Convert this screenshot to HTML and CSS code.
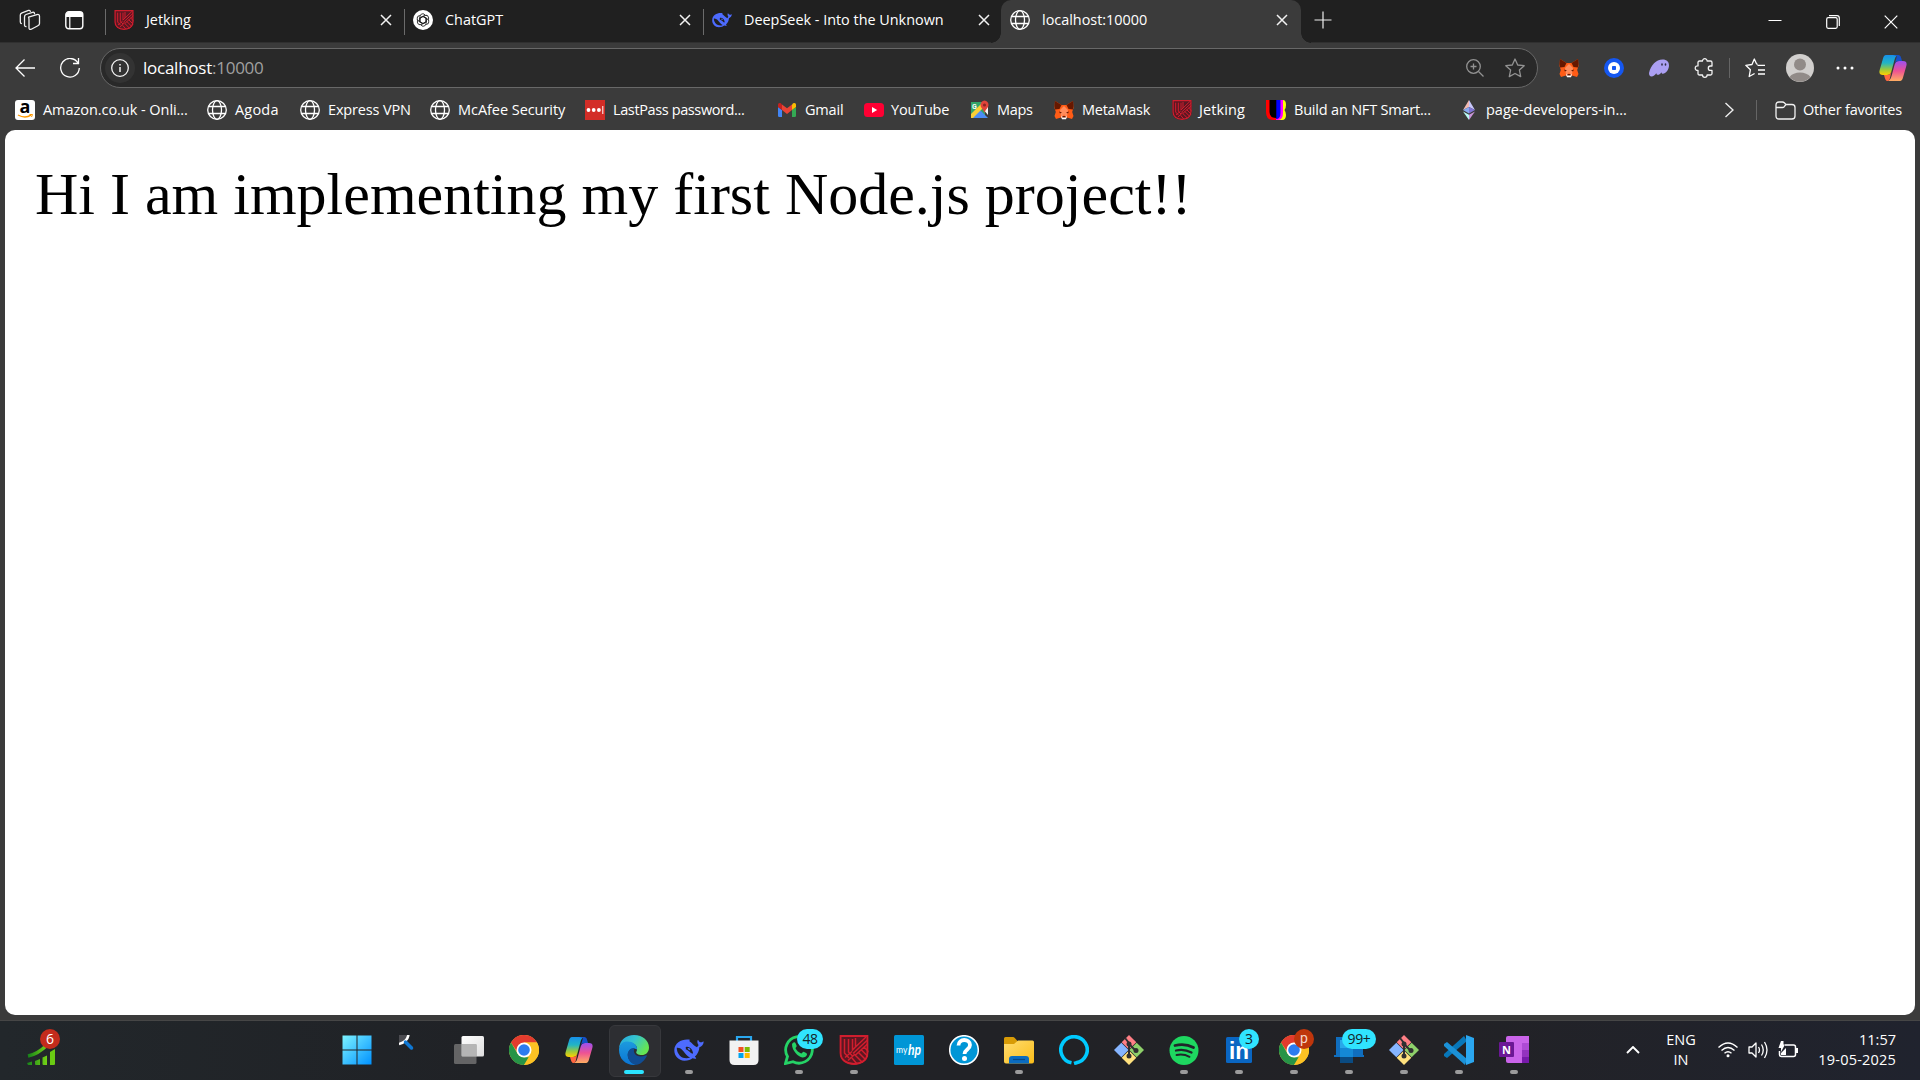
FILE: index.html
```html
<!DOCTYPE html>
<html lang="en">
<head>
<meta charset="utf-8">
<title>localhost:10000</title>
<link rel="stylesheet" href="styles.css">
</head>
<body>
<svg class="defs" width="0" height="0" aria-hidden="true">
  <defs>
    <linearGradient id="win" x1="0" y1="0" x2="1" y2="1"><stop offset="0" stop-color="#7df3ff"/><stop offset="1" stop-color="#0091ff"/></linearGradient>
    <linearGradient id="cpA" x1="0" y1="0" x2="0" y2="1"><stop offset="0" stop-color="#1790ea"/><stop offset=".4" stop-color="#22b5c4"/><stop offset=".72" stop-color="#9bc93c"/><stop offset="1" stop-color="#ffd000"/></linearGradient>
    <linearGradient id="cpB" x1="0" y1="0" x2="0" y2="1"><stop offset="0" stop-color="#9c50f0"/><stop offset=".5" stop-color="#ee5293"/><stop offset="1" stop-color="#ffae62"/></linearGradient>
    <linearGradient id="edgeTop" x1="0" y1="0" x2="1" y2=".5"><stop offset="0" stop-color="#24a5e0"/><stop offset=".5" stop-color="#35c4cf"/><stop offset="1" stop-color="#65e553"/></linearGradient>
    <linearGradient id="edgeLow" x1="0" y1="0" x2="0" y2="1"><stop offset="0" stop-color="#1c9ade"/><stop offset="1" stop-color="#0b75d4"/></linearGradient>
    <linearGradient id="folderG" x1="0" y1="0" x2="1" y2="1"><stop offset="0" stop-color="#ffdc70"/><stop offset="1" stop-color="#fbbd19"/></linearGradient>
    <linearGradient id="bars" x1="0" y1="0" x2="1" y2="0"><stop offset="0" stop-color="#16821a"/><stop offset="1" stop-color="#73d216"/></linearGradient>
    <linearGradient id="pane" x1="0" y1="0" x2="1" y2="1"><stop offset="0" stop-color="#fff"/><stop offset="1" stop-color="#dedede"/></linearGradient>
    <clipPath id="shieldClip"><path d="M.5 0h29v18c0 8-7 12-14.500 12S.5 26 .5 18z"/></clipPath>
  </defs>
  <symbol id="globe" viewBox="0 0 20 20"><g fill="none" stroke="#fff" stroke-width="1.300"><circle cx="10" cy="10" r="9.300"/><ellipse cx="10" cy="10" rx="4.500" ry="9.300"/><path d="M1.500 6.500h17M1.500 13.500h17"/></g></symbol>
  <symbol id="shield" viewBox="0 0 30 30"><g clip-path="url(#shieldClip)"><path fill="#5c1722" d="M0 0h30v30H0z"/><g fill="none" stroke="#d01e2e" stroke-width="1.500"><path stroke-width="2" d="M1.500 0v18c0 7 6 11 13.500 11s13.500-4 13.500-11V1H1"/><path d="M5.500 4v14l4.500 5M9.500 4v13l4 4M13.500 4v11l3-3V3M16 12.500L27 2M14 18.500L29 4.500M16 20.500L29 8.500M6 22.500l7-6M9 25.500l7-6.500M19 17l9 9M22 14.500l8 8M16 20l8 8M25 12l5 5M13 23l5 6"/></g></g></symbol>
  <symbol id="whale" viewBox="0 0 30 22"><path fill="#4d6bfe" fill-rule="evenodd" d="M29.500 2.500c-.6-.2-1 .4-1.500.7-1.600.4-2.700-.4-3.300-1.500-.4-.8-.8-1.100-1.100-.4-.7 1.900.1 3.900 1 4.800-.7 1-1 1.700-1.600 2.100C20 7 18 4 15.800 2.500c-1-.7-.5-1.200.6-1.600C9.500-.8.4 3 .3 11.300.1 17 4.700 21.700 10.300 21.700c4 0 6.600-1.300 8.200-2.500 1.300.5 3.200.7 3.600.2.500-.5-.4-.9-1.300-1.700 2.800-2.600 4.500-6 4.600-9.500 2.300-.6 4.300-3 4.300-5.700zM2.800 8.800c4.500-.5 6.200 3.200 8.400 5.700 1.500 1.700 2.700 3.200 4.900 3.900-2.800 1.400-7.300 1.100-10.200-1.700C3.800 14.500 2.700 11.500 2.800 8.800zM11.500 8.200c3-1.400 6.300 1 7.300 4.800.4 1.400.1 2-.7 1.600-.9-.3-1.500-.9-2.200-1.600-1.400-1.300-3-2.200-4.500-2.900.8-.4.8-1.100.1-1.900z"/><path fill="#4d6bfe" d="M13.600 9.300c1.200-.8 2.700.3 2.700 1.800-1.300.3-2.400-.6-2.700-1.800z"/></symbol>
  <symbol id="fox" viewBox="0 0 20 20"><path fill="#ff5c16" d="M1 1l6.500 4h5L19 1l.5 7-1.300 4 1.300 4-1.500 3-5-1.500-1.500 1.500h-3L7 17.500 2 19 .5 16l1.300-4L.5 8z"/><path fill="#661800" d="M1 1l6.500 4L5.500 9 1 9.500.5 6zm18 0l-6.500 4 2 4 4.500.5.500-3.500z"/><path fill="#ff8d5d" d="M6 10l4-4 4 4-1 7h-2l-1-3-1 3H7z"/><path fill="#fff" d="M7 16.500h6l-1 2.800H8z"/><path fill="#661800" d="M5 11.500l3 1-2 1zm10 0l-3 1 2 1zM8.500 16h3l.3 1.500H8.200z"/></symbol>
  <symbol id="copilot" viewBox="0 0 28 26"><path fill="url(#cpA)" d="M7 0h12c-2.200 1-3 2.800-3.700 5.500L12.500 16c-.7 2.600-2 4-4.700 4H4c-3.200 0-4.200-1.900-3.300-5L4 3.500C4.600 1.200 5.400 0 7 0z"/><path fill="url(#cpB)" d="M21 26H9c2.200-1 3-2.800 3.700-5.500l2.900-10.700c.7-2.500 2-3.800 4.700-3.800H24c3.200 0 4.200 1.900 3.300 5L24 22.500c-.6 2.200-1.400 3.500-3 3.500z"/><path fill="#1650c9" d="M14 0h5.500c2 0 2.500 2 3.500 6h-3c-2.500 0-3.600 1-4.300 3L18 1z"/><path fill="#ff6640" d="M14 26H8.500C6.500 26 6.200 24 5 20h3c2.500 0 3.800-1.200 4.500-4l-1.500 7c-.5 2-1.200 3-2 3z"/></symbol>
  <symbol id="chrome" viewBox="0 0 30 30"><circle cx="15" cy="15" r="15" fill="#ffcd40"/><path fill="#e33b2e" d="M2 7.500A15 15 0 0 1 28 7.500H15L9 18z"/><path fill="#269447" d="M2 7.500L8.800 19 15 22.200h6.200L15 30A15 15 0 0 1 2 7.500z"/><path fill="#fdc223" d="M28 7.500A15 15 0 0 1 15 30l6.500-11-1-8-5.500-3.500z"/><circle cx="15" cy="15" r="7.500" fill="#fff"/><circle cx="15" cy="15" r="5.800" fill="#2c7cf0"/></symbol>
  <symbol id="git" viewBox="0 0 30 30"><path fill="#ff7f85" d="M15 0l7.300 7.300-7.300 7.300-7.300-7.300z"/><path fill="#8ed06a" d="M22.700 7.700L30 15l-7.300 7.300-7.300-7.300z"/><path fill="#86b5ff" d="M7.300 7.700l7.300 7.300-7.300 7.300L0 15z"/><path fill="#ffe17e" d="M15 15.400l7.300 7.300L15 30l-7.300-7.300z"/><path fill="none" stroke="#302f31" stroke-width="2" d="M11 3l4 5v14M15 9l6 6"/><g fill="#302f31"><circle cx="15" cy="9" r="2.500"/><circle cx="22" cy="15.500" r="2.500"/><circle cx="15" cy="21" r="2.500"/></g></symbol>
  <symbol id="x" viewBox="0 0 12 12"><path fill="none" stroke="#f2f2f2" stroke-width="1.500" d="M1 1l10 10M11 1L1 11"/></symbol>
</svg>

<div class="browser">
  <header class="tabstrip">
    <div class="tab-tools">
      <svg width="22" height="22" viewBox="0 0 22 22" fill="none" stroke="#f0f0f0" stroke-width="1.300" stroke-linejoin="round"><path d="M9.500 8.200l8.400-2.600q2.600-.6 2.600 1.600v7.300q0 1.600-1.600 2.200l-6.600 3.500q-2.300.9-2.300-1.500v-7.900q0-1.900-.5-2.600z"/><path d="M15.500 5.200V4.500q-.3-1.600-2-1.200L7 5.500Q5.500 6 5.500 8v8q0 1.800 2 1.500M11.500 2.800q-.5-1.900-2-1.400L3 3.800Q1.300 4.400 1.300 6v7q0 1.600 1.600 1.600"/></svg>
      <svg width="19" height="19" viewBox="0 0 19 19"><rect x=".8" y=".8" width="17" height="17" rx="3" fill="none" stroke="#fff" stroke-width="1.400"/><path fill="#fff" d="M1 6V3.500Q1 1 3.500 1h12Q18 1 18 3.500V6z"/><path d="M4.800 5v12.500" stroke="#fff" stroke-width="1.200"/></svg>
    </div>
    <div class="tab sep"><svg class="fav"><use href="#shield"/></svg><span>Jetking</span><svg class="close"><use href="#x"/></svg></div>
    <div class="tab sep"><svg class="fav" viewBox="0 0 20 20"><circle cx="10" cy="10" r="10" fill="#fff"/><g fill="none" stroke="#222" stroke-width=".9"><path id="petal" d="M7 12V6.500a2.800 2.800 0 0 1 5.300-1.200M7.800 7.500L10 6.300l3.800 2.200"/><use href="#petal" transform="rotate(60 10 10)"/><use href="#petal" transform="rotate(120 10 10)"/><use href="#petal" transform="rotate(180 10 10)"/><use href="#petal" transform="rotate(240 10 10)"/><use href="#petal" transform="rotate(300 10 10)"/></g></svg><span>ChatGPT</span><svg class="close"><use href="#x"/></svg></div>
    <div class="tab sep"><svg class="fav"><use href="#whale"/></svg><span>DeepSeek - Into the Unknown</span><svg class="close"><use href="#x"/></svg></div>
    <div class="tab active"><svg class="fav"><use href="#globe"/></svg><span>localhost:10000</span><svg class="close"><use href="#x"/></svg></div>
    <svg class="plus" viewBox="0 0 18 18"><path d="M9 .5v17M.5 9h17" stroke="#eee" stroke-width="1.200"/></svg>
    <div class="window-buttons">
      <svg width="14" height="14" viewBox="0 0 14 14"><path d="M.5 5.500h13" stroke="#fff"/></svg>
      <svg width="14" height="14" viewBox="0 0 14 14" fill="none" stroke="#fff" stroke-width="1.200"><rect x=".7" y="2.700" width="10.500" height="10.600" rx="1.500"/><path d="M3 .7h8q2.300 0 2.300 2.300v8"/></svg>
      <svg width="14" height="14" viewBox="0 0 14 14"><path d="M.7.700l12.600 12.600M13.300.7L.7 13.300" stroke="#fff" stroke-width="1.200"/></svg>
    </div>
  </header>

  <nav class="toolbar">
    <svg class="back" viewBox="0 0 20 18" fill="none" stroke="#fff" stroke-width="1.300"><path d="M20 9H1M9.500.5L1 9l8.500 8.500"/></svg>
    <svg class="reload" viewBox="0 0 20 20" fill="none" stroke="#fff" stroke-width="1.300"><path d="M18 5A9.300 9.300 0 1 0 19.300 10M18.500 0v5.500H13"/></svg>
    <div class="address">
      <span class="info"><svg width="18" height="18" viewBox="0 0 18 18" fill="none" stroke="#f4f4f4"><circle cx="9" cy="9" r="8.300" stroke-width="1.300"/><path d="M9 8v5M9 5v1.600" stroke-width="1.500"/></svg></span>
      <span class="url">localhost<span>:10000</span></span>
      <svg class="zoom" viewBox="0 0 18 18" fill="none" stroke="#929292" stroke-width="1.300"><circle cx="7.500" cy="7.500" r="6.800"/><path d="M12.500 12.500l5 5M4.500 7.500h6M7.500 4.500v6"/></svg>
      <svg class="star" viewBox="0 0 20 20" fill="none" stroke="#929292" stroke-width="1.300" stroke-linejoin="round"><path d="M10 1l2.700 6 6.500.7-4.800 4.400 1.300 6.500L10 15.500l-5.700 3.100 1.300-6.500L.8 7.700 7.300 7z"/></svg>
    </div>
    <div class="extensions">
      <svg><use href="#fox"/></svg>
      <svg viewBox="0 0 20 20"><circle cx="10" cy="10" r="10" fill="#1557f0"/><circle cx="10" cy="10" r="6" fill="#fff"/><rect x="8" y="8" width="4" height="4" rx=".7" fill="#1557f0"/></svg>
      <svg viewBox="0 0 20 20"><path fill="#ab9ff2" d="M0 15C2 7 7 1.500 13.500 1.500 18 1.500 20 4 20 7.500c0 4-3.500 8.300-6 8.300-1.200 0-1.500-.8-1.400-1.600-1 1.500-2.400 2.600-3.700 2.600-1.200 0-1.700-.8-1.500-1.900C6 17 4.300 18.500 2.500 18.500.8 18.500 0 17 0 15z"/><g fill="#302d45"><ellipse cx="13" cy="6.500" rx=".8" ry="1.300"/><ellipse cx="16.500" cy="6.500" rx=".8" ry="1.300"/></g></svg>
      <svg viewBox="0 0 20 20" fill="none" stroke="#f2f2f2" stroke-width="1.300" stroke-linejoin="round"><path d="M4 4.500Q4 3 5.500 3h3a2.300 2.300 0 1 1 4.600 0h3.400q1.500 0 1.500 1.500V8h-1.500a2.200 2.200 0 0 0 0 4.400H18v3.100q0 1.500-1.500 1.500h-3.400a2.300 2.300 0 0 1-4.600 0h-3Q4 17 4 15.500v-3.100a2.300 2.300 0 1 1 0-4.500z"/></svg>
    </div>
    <span class="divider"></span>
    <svg class="favlist" viewBox="0 0 20 20" fill="none" stroke="#fff" stroke-width="1.300" stroke-linejoin="round"><path d="M11.500 5.700L9.300 1 7 6.500.8 7.300l4.600 4.400-1.200 6.800 5.400-3M11.500 5.700l1 .8M12.500 7.300H20M13 12h7M13 16h7"/></svg>
    <svg class="avatar" viewBox="0 0 28 28"><circle cx="14" cy="14" r="14" fill="#d1cfcd"/><circle cx="14" cy="10.500" r="6" fill="#918b88"/><path fill="#918b88" d="M3.500 23c4-6 17-6 21 0A14 14 0 0 1 3.500 23z"/></svg>
    <svg class="dots" viewBox="0 0 18 4" fill="#fff"><circle cx="2" cy="2" r="1.500"/><circle cx="9" cy="2" r="1.500"/><circle cx="16" cy="2" r="1.500"/></svg>
    <svg class="cop"><use href="#copilot"/></svg>
  </nav>

  <nav class="bookmarks">
    <a class="b1"><svg viewBox="0 0 20 20"><rect width="20" height="20" rx="3" fill="#fff"/><text x="10" y="13" class="amazon-a">a</text><path d="M3 15q7 4 13 .2" fill="none" stroke="#ff9900" stroke-width="1.400"/><path d="M14.500 14.500h3l-1 2.500" fill="none" stroke="#ff9900"/></svg><span>Amazon.co.uk - Onli...</span></a>
    <a class="b2"><svg><use href="#globe"/></svg><span>Agoda</span></a>
    <a class="b3"><svg><use href="#globe"/></svg><span>Express VPN</span></a>
    <a class="b4"><svg><use href="#globe"/></svg><span>McAfee Security</span></a>
    <a class="b5"><svg viewBox="0 0 20 20"><path fill="#d32d27" d="M0 0h20v20H0z"/><g fill="#fff"><circle cx="3.500" cy="10" r="1.900"/><circle cx="8.700" cy="10" r="1.900"/><circle cx="13.900" cy="10" r="1.900"/><path d="M17.300 6h1v8h-1z"/></g></svg><span>LastPass password...</span></a>
    <a class="b6"><svg viewBox="0 0 20 20"><path fill="#4285f4" d="M1 7l4 3v7H2.200Q1 17 1 15.800z"/><path fill="#34a853" d="M19 7l-4 3v7h2.800q1.200 0 1.200-1.200z"/><path fill="#ea4335" d="M5 4.500l5 3.800 5-3.800V10l-5 4-5-4z"/><path fill="#c5221f" d="M1 5c0-2 2-2.800 4-.5V10L1 7z"/><path fill="#fbbc04" d="M19 5c0-2-2-2.800-4-.5V10l4-3z"/></svg><span>Gmail</span></a>
    <a class="b7"><svg viewBox="0 0 20 20"><rect y="3" width="20" height="14" rx="3.500" fill="#ff0033"/><path fill="#fff" d="M8 7l5.200 3L8 13z"/></svg><span>YouTube</span></a>
    <a class="b8"><svg viewBox="0 0 20 20"><path fill="#34a368" d="M1 2h14v16H1z"/><path fill="#4c8df6" d="M9 9l9 9H2z"/><path fill="#f5f5f5" d="M12 8l6 7V7l-3-3z"/><path fill="#fbcf36" d="M1 14L12 3l2 4L3 18H1z"/><text x="2" y="8.500" class="maps-g">G</text><path fill="#e0443a" d="M14.500.5a4.200 4.200 0 0 1 4 4.500c0 3-3 4-4 8-1-4-4-5-4-8a4.200 4.200 0 0 1 4-4.500z"/><circle cx="14.500" cy="5" r="1.600" fill="#8c2723"/></svg><span>Maps</span></a>
    <a class="b9"><svg><use href="#fox"/></svg><span>MetaMask</span></a>
    <a class="b10"><svg><use href="#shield"/></svg><span>Jetking</span></a>
    <a class="b11"><svg viewBox="0 0 20 20"><path fill="#ff0" d="M11 0h6q3 0 3 5 0 3-1.500 5 1.500 2 1.500 5 0 5-4 5h-5z"/><path fill="#f0f" d="M8 0h9v13q0 7-5 7H8z"/><path fill="#00f" d="M7 0h7.500v13q0 6-4.500 6H7z"/><path fill="red" d="M0 0h10v20H7Q0 20 0 12z"/><path fill="#000" d="M3.500 0h6.800v18q-6.800 0-6.800-6z"/></svg><span>Build an NFT Smart...</span></a>
    <a class="b12"><svg viewBox="0 0 20 20"><path fill="#f2b9b2" d="M10 0L4 10l6-3z"/><path fill="#c8c7fb" d="M10 0l6 10-6-3z"/><path fill="#88aaf1" d="M4 10l6-3v6.500z"/><path fill="#8075d5" d="M16 10l-6-3v6.500z"/><path fill="#b8fbf6" d="M4 11.500l6 3.300V20z"/><path fill="#ca95da" d="M16 11.500l-6 3.300V20z"/></svg><span>page-developers-in...</span></a>
    <svg class="more" viewBox="0 0 10 16"><path d="M1.500 1L9 8l-7.500 7" fill="none" stroke="#eee" stroke-width="1.400"/></svg>
    <span class="divider"></span>
    <a class="b13"><svg class="folder" viewBox="0 0 21 19" fill="none" stroke="#f2f2f2" stroke-width="1.300" stroke-linejoin="round"><path d="M1 4q0-3 3-3h3.500q1 0 1.800.8L11 3.500h6q3 0 3 3V15q0 3-3 3H4q-3 0-3-3zM1 6.500h6.500q1 0 1.700-.8L11 3.500"/></svg><span>Other favorites</span></a>
  </nav>

  <main class="page"><p>Hi I am implementing my first Node.js project!!</p></main>
</div>

<footer class="taskbar">
  <div class="widget">
    <svg width="29" height="21" viewBox="0 0 29 21"><path d="M1 12Q11 10 20 1" fill="none" stroke="url(#bars)" stroke-width="3.500"/><g fill="url(#bars)"><path d="M0 19l5-1.500V21H1zM8 17l5-2v6H9q-1 0-1-1zM15.500 13.500l4.500-2V21h-3.500q-1 0-1-1z"/><path fill="#6acb13" d="M23 8l5-3v14.500q0 1.500-1 1.500h-4z"/></g></svg>
    <span class="badge red">6</span>
  </div>
  <div class="apps">
    <div class="app start"><svg viewBox="0 0 30 30"><path fill="url(#win)" d="M.5.500h14v14H.5zM15.500.500h14v14h-14zM.5 15.500h14v14H.5zM15.500 15.500h14v14h-14z"/></svg></div>
    <div class="app"><svg viewBox="0 0 30 30"><path fill="#4b4b50" d="M0 0h8v2L2 9H0z"/><path d="M9.500 0Q8 7 0 9" fill="none" stroke="#fff" stroke-width="2.600"/><path d="M6.500 7l6 6" stroke="#0f78d4" stroke-width="3.500" stroke-linecap="round"/></svg></div>
    <div class="app"><svg viewBox="0 0 30 30"><rect x="7.500" y="1" width="22.500" height="20.500" rx="1.500" fill="url(#pane)"/><rect y="9" width="22.500" height="20" rx="1.500" fill="#777" fill-opacity=".78"/><path fill="#b5b5b5" d="M7.500 9h15v12.500h-14q-1 0-1-1z"/></svg></div>
    <div class="app"><svg><use href="#chrome"/></svg></div>
    <div class="app"><svg class="cop"><use href="#copilot"/></svg></div>
    <div class="app current"><svg viewBox="0 0 30 30"><path fill="url(#edgeTop)" d="M0 13C1 5 7 0 15 0c9 0 15 6 15 12.500 0 5-3.500 7.500-7 7.500-4 0-6.300-1.600-5.700-3 1-1.500 1.500-5-1.300-7.500C11.500 6 3 7 0 13z"/><path fill="url(#edgeLow)" d="M0 15C0 9 4 6.500 8.500 6.500c6 0 10 4 9.500 8-5-3-9.500 1-9.200 6 .3 4.500 4 8 8.700 9.300C7 31 0 24 0 15z"/><path fill="#104d94" d="M8.700 20c0-4 2.800-7.500 7-7-3 5 2.800 11 10.800 7.500 1-.4 1.800 0 1 1.200C24.500 27 20 30 16.500 29.800 12 29 8.700 24.500 8.700 20z"/></svg></div>
    <div class="app open"><svg><use href="#whale"/></svg></div>
    <div class="app"><svg viewBox="0 0 30 30"><path d="M8 7V2h14v5" fill="none" stroke="#2aa7ee" stroke-width="2.200"/><path fill="#f2f2f2" d="M.5 5.500h29V25q0 5-5 5h-19q-5 0-5-5z"/><path fill="#f25022" d="M9.500 12h5v5h-5z"/><path fill="#7fba00" d="M15.700 12h5v5h-5z"/><path fill="#00a4ef" d="M9.500 18h5v5h-5z"/><path fill="#ffb900" d="M15.700 18h5v5h-5z"/></svg></div>
    <div class="app open"><svg viewBox="0 0 30 30"><path d="M1.500 28.500l2-7A13.300 13.300 0 1 1 9 26.700z" fill="none" stroke="#25d366" stroke-width="2.800"/><path fill="#25d366" d="M8 9.500c0-1 1.500-2.500 2.500-2.300.7 0 1 .6 2.200 3.800 0 .8-1.200 1.600-1.200 2.300 1.300 2.500 3.200 4.200 5.700 5.200.7 0 1.500-1.800 2.200-1.800 3 1.300 3.800 1.700 3.600 2.700-.3 2-2.500 3.100-4.500 3C14 22 8 15.500 8 9.500z"/></svg><span class="badge cyan n48">48</span></div>
    <div class="app open"><svg><use href="#shield"/></svg></div>
    <div class="app"><svg viewBox="0 0 30 30"><rect width="30" height="30" rx="1.500" fill="#0096d6"/><text x="2" y="17.500" class="my">my</text><text x="14" y="19.500" class="hp" textLength="13" lengthAdjust="spacingAndGlyphs">hp</text></svg></div>
    <div class="app"><svg viewBox="0 0 30 30"><circle cx="15" cy="15" r="14.300" fill="#0096d6" stroke="#fff" stroke-width="1.500"/><path d="M9.500 10.500C9.500 3 21 3.500 21 10c0 4.500-5.500 4.500-5.500 9" fill="none" stroke="#fff" stroke-width="3.800"/><circle cx="15.500" cy="23.500" r="2.500" fill="#fff"/></svg></div>
    <div class="app open"><svg viewBox="0 0 30 30"><path fill="#d89b06" d="M0 3.500Q0 2 1.500 2H9q1 0 1.800 1l2.700 3v4H0z"/><path fill="url(#folderG)" d="M0 9h10l4-3.500h14.500Q30 5.500 30 7v19.500q0 2-2 2H2q-2 0-2-2z"/><path fill="#0b6cc0" d="M5 28.500V24q0-3 3-3h14q3 0 3 3v4.500z"/><path d="M9 24.500h12" stroke="#084887" stroke-width="1.200"/></svg></div>
    <div class="app"><svg viewBox="0 0 30 30"><path d="M12.500 27.800A13.200 13.200 0 1 1 17 27.900L15 28.500" fill="none" stroke="#00caff" stroke-width="3.600"/></svg></div>
    <div class="app"><svg><use href="#git"/></svg></div>
    <div class="app open"><svg viewBox="0 0 30 30"><circle cx="15" cy="15.500" r="14.500" fill="#1ed760"/><g fill="none" stroke="#20252a" stroke-linecap="round"><path d="M6 10.500q10-2.500 18.500 2" stroke-width="2.800"/><path d="M7 15.500q8-2 15.500 2" stroke-width="2.300"/><path d="M7.500 20q7-1.500 13 1.800" stroke-width="1.900"/></g></svg></div>
    <div class="app open"><svg viewBox="0 0 30 30"><rect x="2" y="2" width="26" height="26" rx="1.500" fill="#0a66c2"/><text x="5" y="24" class="in" textLength="20" lengthAdjust="spacingAndGlyphs">in</text></svg><span class="badge cyan n3">3</span></div>
    <div class="app open"><svg><use href="#chrome"/></svg><span class="badge profile">p</span></div>
    <div class="app open"><svg viewBox="0 0 30 30"><path fill="#106ebe" d="M2 2h27v18h1v2H0v-2h2z"/><path fill="#28a8ea" d="M6 5h13v14H6z"/><path fill="#1489d6" d="M6 13h13v9H6z"/><path fill="#0a4b82" d="M6 22h13v6H6z"/></svg><span class="badge cyan n99">99+</span></div>
    <div class="app open"><svg><use href="#git"/></svg></div>
    <div class="app open"><svg viewBox="0 0 30 30"><path fill="#0877b9" d="M0 19l20-18 3 5L3 23 0 21z"/><path fill="#1b91d7" d="M3 7l20 17-2 6L0 11V9z"/><path fill="#2ba7f0" d="M22 0l8 3v24l-8 3z"/></svg></div>
    <div class="app open"><svg viewBox="0 0 30 30"><path fill="#ca64ea" d="M7 3q0-2 2-2h21v27H9q-2 0-2-2z"/><path fill="#ae4bd5" d="M23 8h7v7h-7z"/><path fill="#9332bf" d="M23 15h7v7h-7z"/><path fill="#7719aa" d="M23 22h7v6h-7z"/><rect y="7" width="15" height="15" rx="1" fill="#6b1795"/><text x="7.500" y="18.700" class="note-n">N</text></svg></div>
  </div>
  <div class="tray">
    <svg class="up" viewBox="0 0 14 8"><path d="M1 7l6-6 6 6" fill="none" stroke="#fff" stroke-width="1.900"/></svg>
    <div class="lang"><span>ENG</span><span>IN</span></div>
    <svg class="wifi" viewBox="0 0 20 16" fill="none" stroke="#fff" stroke-width="1.400"><path d="M.5 5.500q9.500-9 19 0M3.500 8.500q6.500-6 13 0M6.500 11.300q3.500-3 7 0"/><circle cx="10" cy="13.700" r="1.500" fill="#fff" stroke="none"/></svg>
    <svg class="sound" viewBox="0 0 20 18" fill="none" stroke="#fff" stroke-width="1.300" stroke-linejoin="round"><path d="M1 6h3l4-4v14l-4-4H1zM10.500 6q2 3 0 6M13.500 3.500q3.500 5.500 0 11M16.500 1q5 8 0 16"/></svg>
    <svg class="battery" viewBox="0 0 20 18"><path d="M7 4h8.500q2 0 2 2v7.500q0 2-2 2h-12q-2 0-2-2V10" fill="none" stroke="#fff" stroke-width="1.500"/><path fill="#fff" d="M18 7h2v5h-2zM3 0h2.500v3.500H7L3 11V7H.5zM3 12l5-5v7H3z"/></svg>
    <div class="clock"><span>11:57</span><span class="date">19-05-2025</span></div>
  </div>
</footer>
</body>
</html>
```
FILE: styles.css
```css
* { box-sizing: border-box; }
body {
  margin: 0;
  width: 1920px;
  height: 1080px;
  overflow: hidden;
  display: flex;
  flex-direction: column;
  background: #3b3b3b;
  color: #fff;
  font: 15px/20px "Open Sans", "Noto Sans", sans-serif;
  white-space: nowrap;
}
.defs { position: absolute; }
svg { display: block; flex: none; }
.browser { height: 1021px; padding-bottom: 5px; border-bottom: 1px solid #464646; display: flex; flex-direction: column; }

/* Tab strip */
.tabstrip { height: 43px; background: #202020; border-bottom: 1px solid #303030; display: flex; align-items: flex-start; font-size: 14.400px; }
.tab-tools { width: 103px; height: 40px; padding-left: 19px; display: flex; align-items: center; gap: 24px; }
.tab { width: 299px; height: 43px; padding: 0 10px 3px 11px; display: flex; align-items: center; position: relative; }
.tab span { margin-left: 12px; flex: 1; }
.tab.sep::before { content: ""; position: absolute; left: 2px; top: 9px; width: 1px; height: 26px; background: #6b6b6b; }
.fav { width: 20px; height: 20px; }
.close { width: 12px; height: 12px; }
.tab.active { width: 300px; margin-left: 1px; padding-left: 9px; background: #3b3b3b; border-radius: 10px 10px 0 0; }
.tab.active .close { margin-right: 3px; }
.tab.active::before, .tab.active::after { content: ""; position: absolute; bottom: 0; width: 10px; height: 10px; }
.tab.active::before { left: -10px; background: radial-gradient(circle at 0 0, #202020 9.500px, #3b3b3b 10px); }
.tab.active::after { right: -10px; background: radial-gradient(circle at 100% 0, #202020 9.500px, #3b3b3b 10px); }
.plus { width: 18px; height: 18px; margin: 11px 0 0 13px; }
.window-buttons { margin: 15px 22px 0 auto; display: flex; gap: 44px; }

/* Toolbar */
.toolbar { height: 50px; padding: 0 13px 0 15px; display: flex; align-items: center; }
.back { width: 20px; height: 18px; }
.reload { width: 20px; height: 20px; margin-left: 25px; }
.address { width: 1438px; height: 40px; margin-left: 20px; border: 1px solid #686868; border-radius: 20px; background: #292929; display: flex; align-items: center; padding: 0 12px 0 4px; }
.info { width: 30px; height: 30px; border-radius: 50%; background: #333; display: grid; place-items: center; }
.url { margin-left: 8px; font-size: 17px; letter-spacing: -.25px; flex: 1; }
.url span { color: #a0a0a0; }
.zoom { width: 18px; height: 18px; margin-right: 21px; }
.star { width: 20px; height: 20px; }
.extensions { margin-left: 21px; display: flex; gap: 25px; }
.extensions svg { width: 20px; height: 20px; }
.divider { width: 1px; height: 20px; background: #656565; }
.extensions + .divider { margin-left: 15px; }
.favlist { width: 20px; height: 20px; margin-left: 15px; }
.avatar { width: 28px; height: 28px; margin-left: 21px; }
.dots { width: 18px; height: 4px; margin-left: 22px; }
.cop { width: 28px; height: 26px; }
.toolbar .cop { margin-left: auto; }

/* Favorites bar */
.bookmarks { height: 37px; padding: 0 0 3px 15px; display: flex; align-items: center; font-size: 14.500px; }
.bookmarks a { display: flex; align-items: center; gap: 8px; }
.bookmarks a svg { width: 20px; height: 20px; }
.bookmarks a .folder { width: 21px; height: 19px; }
.b1 { width: 192px; letter-spacing: -.05px; }
.b2 { width: 93px; letter-spacing: .2px; }
.b3 { width: 130px; letter-spacing: -.15px; }
.b4 { width: 155px; letter-spacing: -.05px; }
.b5 { width: 192px; letter-spacing: -.38px; }
.b6 { width: 87px; letter-spacing: -.2px; }
.b7 { width: 106px; letter-spacing: -.2px; }
.b8 { width: 84px; letter-spacing: -.3px; }
.b9 { width: 118px; letter-spacing: -.25px; }
.b10 { width: 94px; letter-spacing: .1px; }
.b11 { width: 193px; letter-spacing: -.2px; }
.b12 { width: 265px; }
.b13 { letter-spacing: -.2px; }
.bookmarks .b10, .bookmarks .b12, .bookmarks .b7, .bookmarks .b8, .bookmarks .b13 { gap: 7px; }
.more { width: 10px; height: 16px; }
.bookmarks .divider { margin: 0 18px 0 22px; }
.amazon-a { font: bold 18px "Open Sans", sans-serif; text-anchor: middle; fill: #000; }
.maps-g { font: bold 7px Roboto, sans-serif; fill: #fff; }

/* Page */
.page { flex: 1; margin: 0 5px; background: #fff; color: #000; border-radius: 10px; padding: 30px; }
.page p { margin: 0; font: 60px/69px "Liberation Serif", "Times New Roman", serif; }

/* Taskbar */
.taskbar { height: 59px; background: linear-gradient(90deg, #22272b, #202226 25%, #222226 75%, #20232e); display: flex; position: relative; }
.widget { position: relative; width: 331px; padding: 23px 0 0 27px; }
.apps { display: grid; grid-template-columns: repeat(22, 55px); }
.app { position: relative; display: flex; justify-content: center; padding-top: 14px; height: 59px; }
.app svg { width: 30px; height: 30px; position: relative; }
.app svg.cop { width: 28px; }
.start svg { margin-right: 3px; }
.current::before { content: ""; position: absolute; left: 3px; top: 4px; width: 50px; height: 50px; border: 1px solid #37383c; border-radius: 6px; background: #2d2e32; }
.open::after, .current::after { content: ""; position: absolute; left: 24px; top: 49px; width: 8px; height: 4px; border-radius: 2px; background: #9b9b9c; }
.current::after { left: 18px; width: 20px; background: #2be3ff; }
.badge { position: absolute; height: 20px; border-radius: 10px; text-align: center; font-size: 14px; line-height: 20px; }
.red { left: 40px; top: 8px; width: 20px; background: #c42b1c; }
.cyan { top: 8px; background: #30e4ff; color: #14252a; }
.n48 { left: 26px; width: 26px; letter-spacing: -.5px; }
.n3 { left: 28px; width: 20px; }
.n99 { left: 21px; width: 34px; letter-spacing: -.3px; }
.profile { left: 28px; top: 8px; width: 20px; background: #bf360c; color: #f3d5ca; font: 14px/18px Roboto, sans-serif; }
.my { font: 8.500px Lato, sans-serif; fill: #fff; }
.hp { font: italic bold 14px "Liberation Sans", sans-serif; fill: #fff; }
.in { font: bold 23px "Liberation Sans", sans-serif; fill: #fff; }
.note-n { font: bold 11px "Open Sans", sans-serif; text-anchor: middle; fill: #fff; }
.tray { flex: 1; padding: 0 24px 2px 0; display: flex; align-items: center; }
.up { width: 14px; height: 8px; margin-left: 85px; }
.lang { width: 30px; margin-left: 26px; text-align: center; display: grid; font-size: 14.500px; }
.wifi { width: 20px; height: 16px; margin-left: 22px; }
.sound { width: 20px; height: 18px; margin-left: 10px; }
.battery { width: 20px; height: 18px; margin-left: 10px; }
.clock { margin-left: auto; display: grid; text-align: right; font-size: 14.500px; }
.date { letter-spacing: .2px; }
```
